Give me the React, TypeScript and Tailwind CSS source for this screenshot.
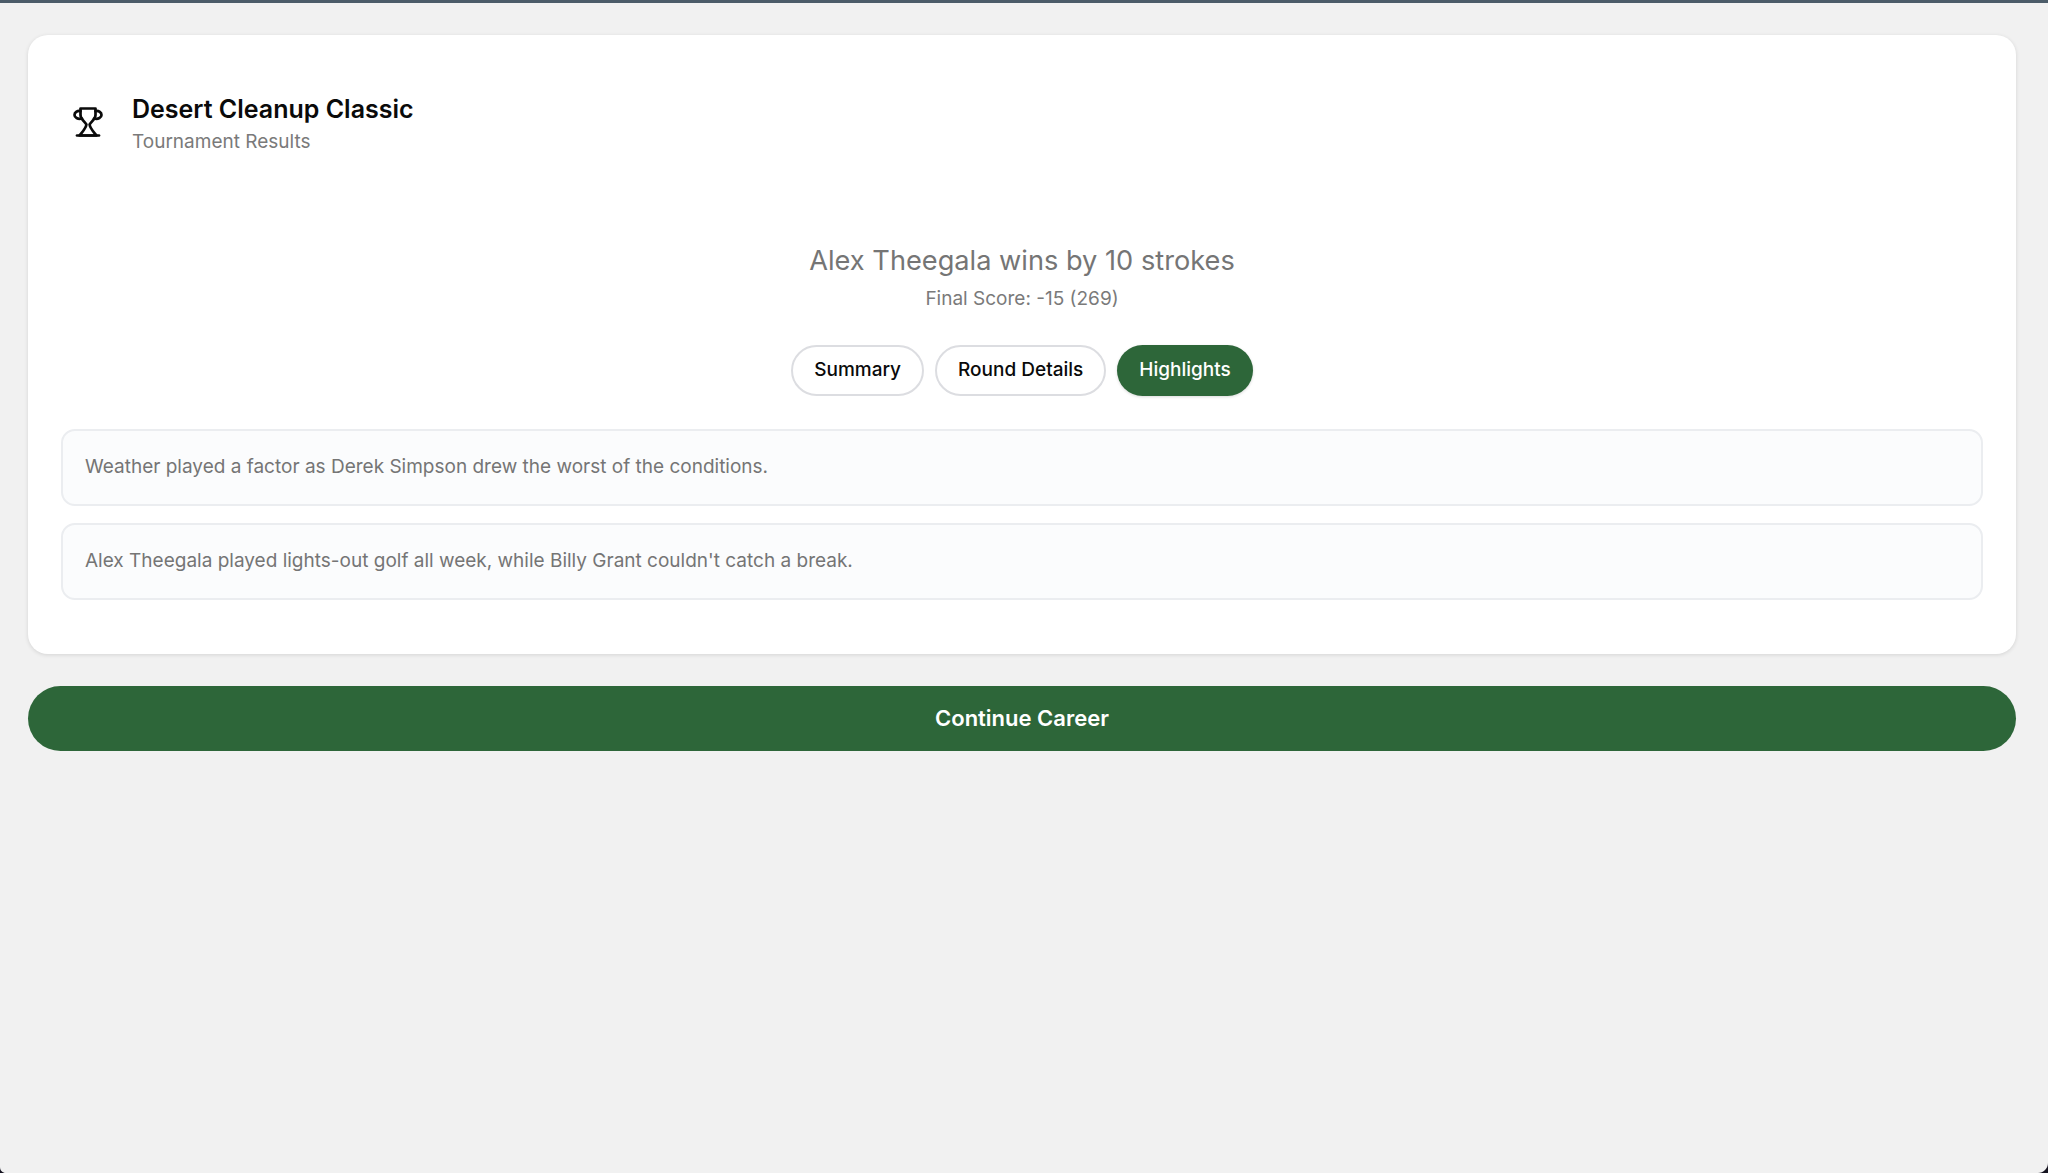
import React, { useState } from 'react';

const tabs = ['Summary', 'Round Details', 'Highlights'];

const highlights = [
  'Weather played a factor as Derek Simpson drew the worst of the conditions.',
  "Alex Theegala played lights-out golf all week, while Billy Grant couldn't catch a break.",
];

const TrophyIcon = () => (
  <svg className="mt-[13px] shrink-0" width="32" height="32" viewBox="0 0 32 32" fill="none" stroke="#0a0a0a" strokeWidth="2.7" strokeLinejoin="round" strokeLinecap="round">
    <path d="M8.5 2.5H23.5V9C23.5 13 19.5 15.5 17.6 18.5C17.8 22 21 25 24.5 29.5H7.5C11 25 14.2 22 14.4 18.5C12.5 15.5 8.5 13 8.5 9Z" />
    <path d="M8.5 5C5 4.5 2.5 6.5 2.5 9C2.5 11.5 5.5 13.5 10 12.5" />
    <path d="M23.5 5C27 4.5 29.5 6.5 29.5 9C29.5 11.5 26.5 13.5 22 12.5" />
    <path d="M5 29.5H27" />
  </svg>
);

export default function App() {
  const [active, setActive] = useState('Highlights');

  return (
    <div className="relative min-h-[1173px] bg-[#f1f1f1] font-['Inter',sans-serif]">
      <div className="h-[3px] bg-[#4c5c69]" />
      <div className="pl-[28px] pr-[32px] pt-[32px]">
        <div className="rounded-[20px] bg-white px-[33px] pb-[54px] pt-[58px] shadow-[0_1px_4px_rgba(0,0,0,0.12)]">
          <div className="flex items-start gap-[28px] pl-[11px]">
            <TrophyIcon />
            <div>
              <h1 className="text-[25px] font-semibold leading-[32px] text-[#0a0a0a]">Desert Cleanup Classic</h1>
              <p className="mt-[1px] text-[19px] leading-[32px] text-[#7a7a7a]">Tournament Results</p>
            </div>
          </div>

          <div className="mt-[83px] text-center">
            <h2 className="text-[27.2px] leading-[40px] text-[#757575]">Alex Theegala wins by 10 strokes</h2>
            <p className="mt-[4px] text-[19px] leading-[28px] text-[#7a7a7a]">Final Score: -15 (269)</p>
          </div>

          <div className="mt-[32px] flex justify-center gap-[11px]">
            {tabs.map((tab) => (
              <button
                key={tab}
                onClick={() => setActive(tab)}
                className={
                  tab === active
                    ? 'h-[51px] rounded-full bg-[#2d6639] px-[22px] text-[19px] font-medium text-white shadow-[0_1px_3px_rgba(0,0,0,0.15)]'
                    : 'h-[51px] rounded-full border-2 border-[#dcdde1] bg-white px-[21px] text-[19px] font-medium text-[#0a0a0a]'
                }
              >
                {tab}
              </button>
            ))}
          </div>

          <div className="mt-[33px] flex flex-col gap-[17px]">
            {highlights.map((text) => (
              <div key={text} className="flex h-[77px] items-center rounded-[14px] border-2 border-[#ebedf0] bg-[#fbfcfd] px-[22px] text-[19px] text-[#757575]">
                {text}
              </div>
            ))}
          </div>
        </div>

        <button className="mt-[32px] h-[65px] w-full rounded-full bg-[#2d6639] text-[22px] font-semibold text-white">
          Continue Career
        </button>
      </div>

      <svg className="absolute bottom-0 left-0" width="6" height="6" viewBox="0 0 6 6">
        <path d="M0 0C0 3.5 2.5 6 6 6H0Z" fill="#14121f" />
      </svg>
      <svg className="absolute bottom-0 right-0" width="10" height="10" viewBox="0 0 10 10">
        <path d="M10 0C10 5.5 5.5 10 0 10H10Z" fill="#14121f" />
      </svg>
    </div>
  );
}
